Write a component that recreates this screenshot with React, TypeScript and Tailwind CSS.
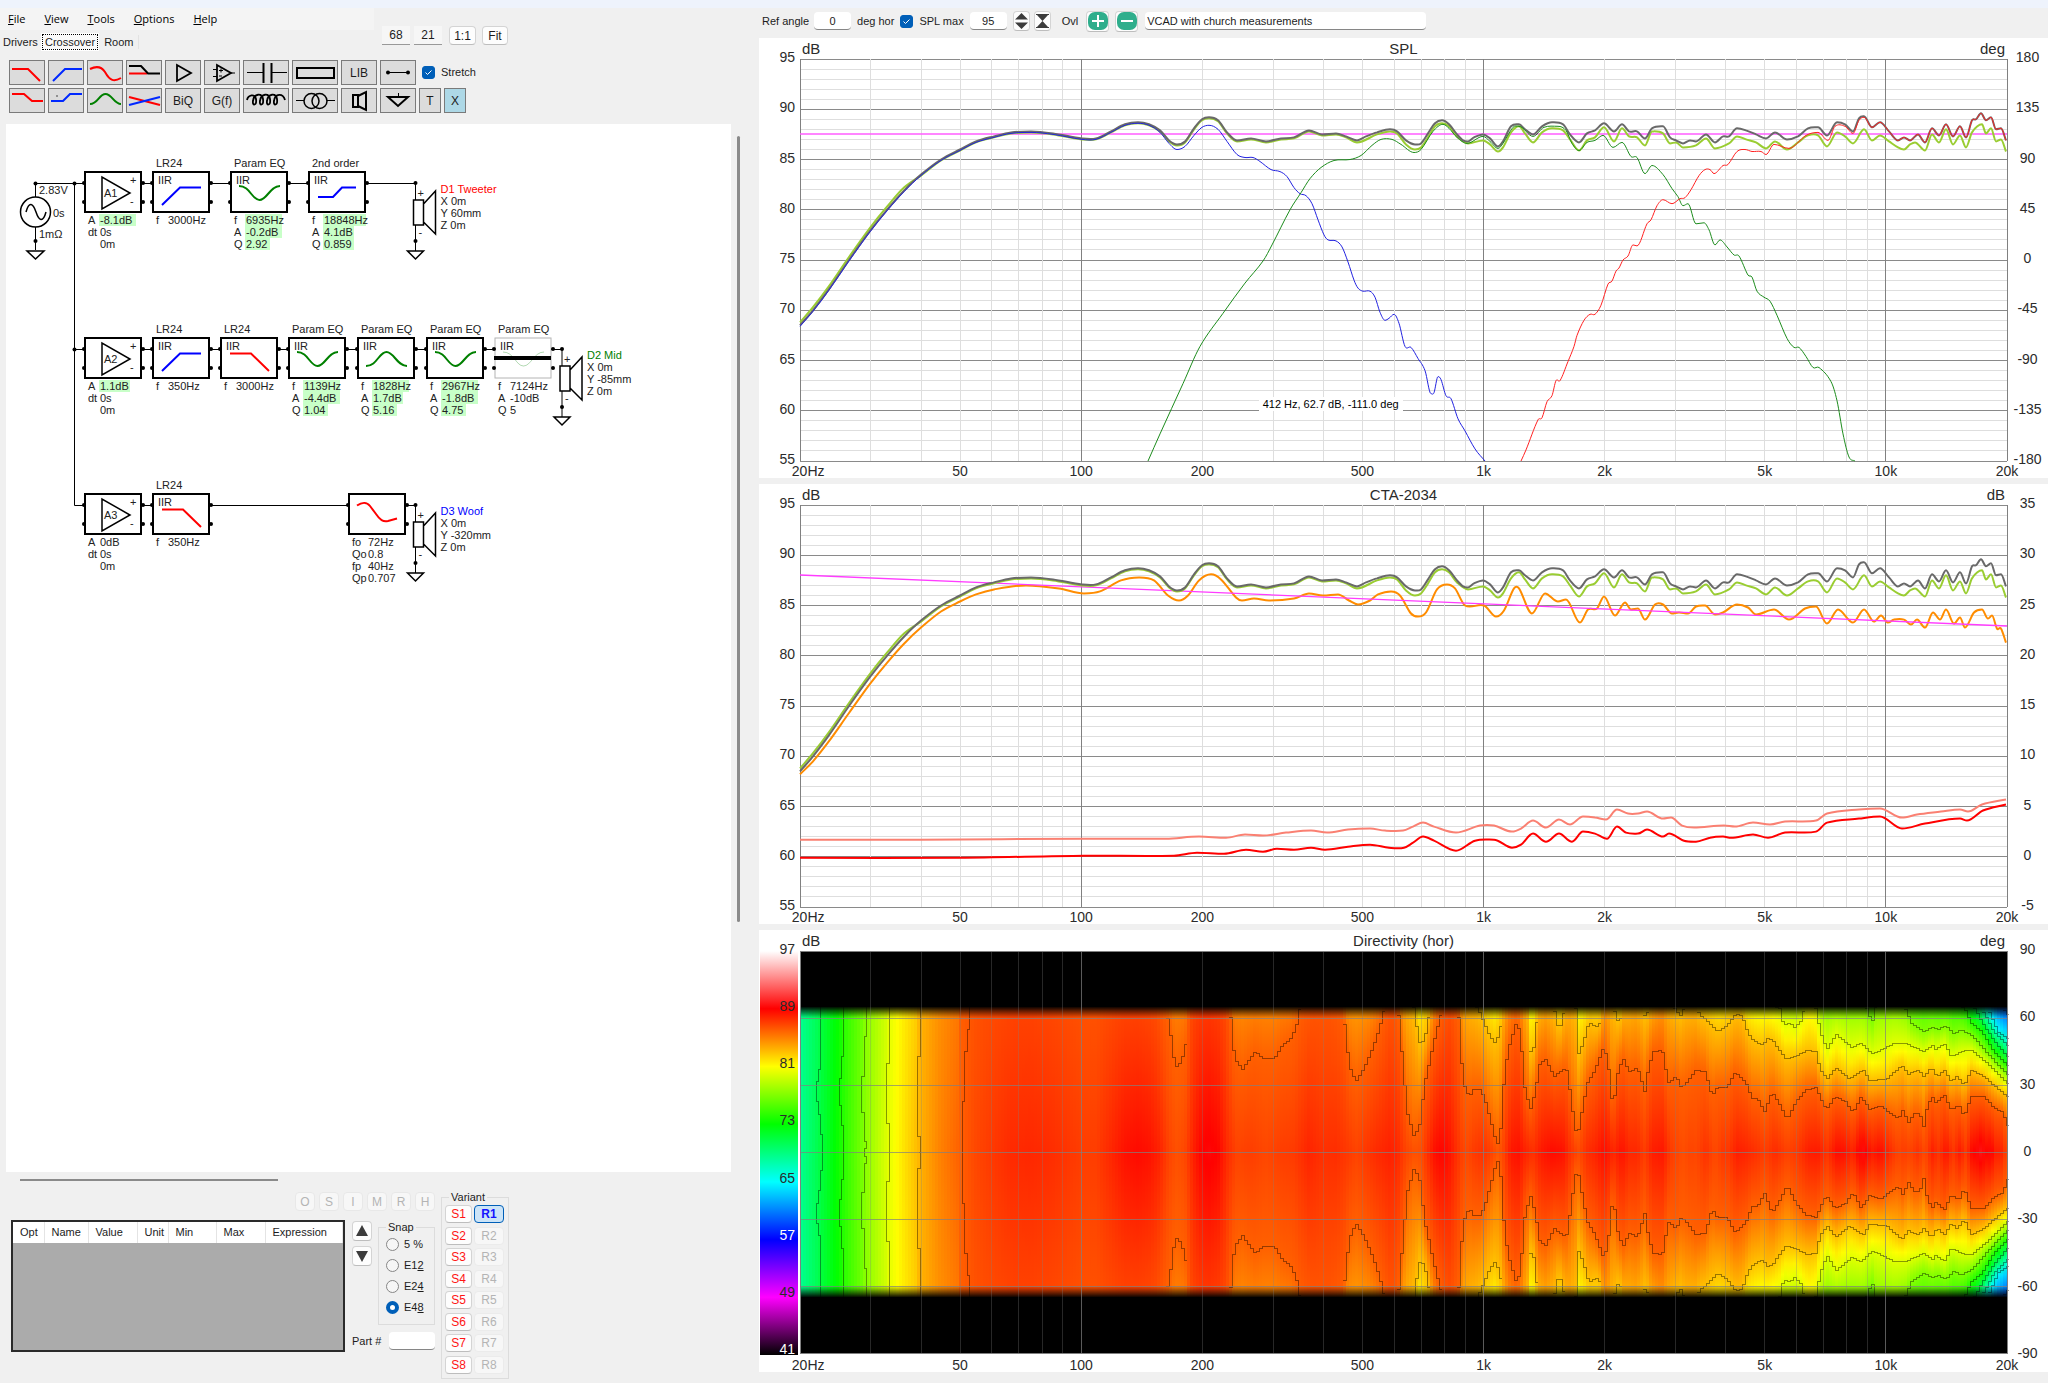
import { ReactNode } from "react";

const PLOT_W = 1207;
const PLOT_H = 402;

// curves: x along the plot, level in dB
const ON_AXIS = [
    0, 68.5, 13, 70, 29, 72.1, 49, 75, 70, 77.9, 87, 80, 104, 81.9, 121, 83.5, 141, 85, 160, 86, 176, 86.8, 194, 87.3,
    211, 87.7, 231, 87.8, 253, 87.6, 282, 87.1, 296, 87.1, 311, 87.8, 325, 88.5, 338, 88.7, 349, 88.5, 360, 87.9, 369,
    86.9, 377, 86.5, 385, 86.8, 394, 88.1, 402, 89, 409, 89.2, 418, 88.9, 427, 87.7, 437, 86.9, 451, 87.1, 466, 86.8,
    481, 87.1, 494, 87.2, 509, 87.9, 522, 87.5, 536, 87.6, 546, 87.3, 557, 86.9, 566, 87.3, 577, 87.7, 590, 88, 597,
    87.8, 606, 86.9, 615, 86.5, 621, 86.6, 628, 87.6, 635, 88.6, 642, 88.9, 649, 88.5, 657, 87.5, 663, 86.9, 668, 86.8,
    674, 87.2, 683, 87.5, 690, 87.1, 698, 86.3, 703, 86.8, 711, 88.3, 719, 88.5, 725, 88, 733, 87.5, 742, 88.3, 752,
    88.7, 763, 88.5, 770, 87.5, 779, 86.7, 787, 87.6, 795, 87.9, 804, 88.6, 814, 87.8, 822, 88.5, 829, 87.8, 837, 87.8,
    845, 87.1, 852, 88.1, 863, 88.3, 870, 87.2, 876, 86.9, 883, 86.6, 890, 86.9, 896, 86.8, 906, 87.5, 915, 86.7, 923,
    87.3, 929, 87.3, 937, 88.1, 946, 87.9, 956, 87.5, 966, 87.1, 975, 87.7, 987, 87, 998, 87.3, 1008, 88.1, 1018, 88.2,
    1027, 87.4, 1037, 88.7, 1045, 88.5, 1053, 87.8, 1059, 89.1, 1064, 89.3, 1072, 88.2, 1080, 88.7, 1089, 87.8, 1098,
    86.9, 1104, 87.2, 1110, 86.9, 1118, 87.5, 1125, 86.7, 1132, 88.1, 1139, 87.4, 1146, 88.5, 1153, 87.3, 1160, 88.3,
    1166, 87.2, 1172, 88.9, 1176, 89, 1181, 89.6, 1186, 88.9, 1191, 89.2, 1196, 88, 1201, 88.1, 1206, 86.9,
];

const LISTENING_HIGH = [
    557, 86.7, 577, 87.5, 590, 87.8, 597, 87.6, 606, 86.5, 615, 86, 621, 86.2, 628, 87.2, 635, 88.3, 642, 88.6, 649,
    88.3, 657, 87.3, 668, 86.6, 683, 86.9, 690, 86.5, 698, 85.8, 703, 86.2, 711, 87.7, 719, 88.3, 725, 87.6, 733, 86.7,
    742, 87.7, 752, 88.1, 763, 87.9, 770, 87, 779, 85.9, 787, 86.9, 795, 87.2, 804, 88.2, 814, 86.8, 822, 88.1, 829,
    87.3, 837, 87.2, 845, 86.4, 852, 87.8, 863, 87.6, 870, 86.6, 876, 86.7, 883, 86.2, 896, 86.4, 906, 87.1, 915, 86.1,
    929, 86.6, 937, 87.3, 946, 87, 956, 86.7, 966, 86.1, 975, 86.8, 987, 86, 998, 86.7, 1008, 87.4, 1018, 87.4, 1027,
    86.3, 1037, 87.7, 1045, 87.3, 1053, 86.6, 1064, 88, 1072, 86.9, 1080, 87.4, 1089, 86.8, 1098, 86.2, 1104, 86, 1110,
    86.5, 1115, 86.7, 1125, 85.9, 1132, 87.5, 1139, 86.7, 1146, 88, 1153, 86.5, 1160, 87.4, 1166, 86.2, 1172, 87.7,
    1182, 88.5, 1186, 87.6, 1191, 88.1, 1196, 86.8, 1201, 87, 1206, 85.8,
];

const WOOFER_HIGH = [
    360, 87.7, 369, 86.6, 377, 86, 385, 86.3, 394, 87.4, 402, 88.2, 409, 88.4, 418, 88, 427, 86.8, 437, 85.5, 445, 85.2,
    453, 85.2, 460, 84.8, 471, 84, 480, 83.8, 487, 83.3, 494, 82.2, 500, 81.6, 506, 81.4, 512, 80.6, 518, 79, 524, 77.5,
    528, 77, 536, 76.9, 542, 76.3, 548, 74.8, 554, 73, 558, 72.2, 563, 71.9, 570, 71.9, 575, 71.3, 580, 69.8, 585, 69,
    589, 69.2, 594, 69.6, 599, 68.7, 605, 66.4, 611, 66.3, 618, 65.2, 625, 64, 631, 61.7, 634, 61.8, 638, 63.4, 641,
    63.1, 646, 61.5, 651, 61.2, 658, 59.2, 665, 58, 675, 56.2, 685, 55,
];

const MID = [
    348, 55, 360, 57.7, 383, 62.7, 400, 66.4, 423, 69.7, 445, 72.7, 463, 74.9, 472, 76.5, 490, 80, 501, 81.7, 510, 83.1,
    521, 84.2, 534, 84.9, 550, 85, 561, 85.4, 572, 86.4, 581, 87, 592, 87, 601, 86.5, 614, 85.7, 621, 86, 633, 87.8,
    643, 88.5, 649, 88.1, 657, 87.2, 667, 86.6, 683, 87.3, 690, 86.8, 698, 86.1, 703, 86.6, 713, 88.2, 719, 88.3, 733,
    87.3, 744, 88.2, 758, 88.3, 766, 87.9, 772, 86.6, 779, 85.9, 787, 86.7, 795, 86.9, 803, 87.4, 813, 86.2, 822, 86.7,
    831, 85.3, 837, 85.2, 845, 83.6, 852, 84.4, 863, 83.5, 872, 82.1, 878, 81.3, 883, 80.4, 888, 80.6, 896, 78.6, 904,
    78.7, 909, 78, 915, 76.5, 920, 77, 927, 76.3, 934, 75.5, 939, 75.4, 948, 73.5, 952, 73.3, 957, 71.9, 964, 71.3, 970,
    70.9, 977, 69.5, 987, 67.2, 994, 66.3, 999, 66.3, 1006, 65.4, 1013, 64.3, 1019, 64.3, 1031, 62.9, 1037, 61, 1043,
    57.7, 1049, 55.4, 1055, 55,
];

const TWEETER_LOW = [
    721, 55, 726, 56.1, 738, 59.1, 742, 59.3, 747, 60.9, 752, 61.5, 756, 63, 760, 63, 768, 64.9, 774, 66.4, 777, 67.5,
    784, 69, 790, 69.6, 795, 69.6, 801, 70.5, 808, 72.6, 812, 72.9, 816, 73.9, 819, 74.2, 823, 75, 828, 75.4, 833, 76.5,
    837, 76.4, 847, 78.6, 851, 79, 857, 80.4, 863, 81, 872, 80.6, 880, 81.1, 885, 81.2, 891, 82, 899, 83.4, 905, 84,
    910, 84, 914, 83.6, 923, 84.4, 928, 84.5, 937, 85.8, 945, 86, 952, 85.8, 961, 85.8, 966, 85.5, 974, 86.5, 989, 86.1,
    1006, 87.4, 1018, 87.7, 1028, 86.9, 1035, 88.3, 1045, 88.3, 1053, 87.6, 1059, 88.9, 1064, 89.2,
];

const POWER = [
    0, 68.2, 13, 69.5, 29, 71.5, 49, 74.3, 70, 77.2, 87, 79.3, 104, 81.2, 121, 82.8, 141, 84.4, 160, 85.4, 176, 86.1,
    194, 86.6, 226, 87, 259, 86.7, 284, 86.2, 300, 86.4, 321, 87.5, 339, 87.8, 354, 87.5, 368, 86, 379, 85.5, 388, 86,
    399, 87.5, 411, 88.1, 421, 87.6, 436, 85.8, 442, 85.5, 454, 85.7, 469, 85.5, 494, 85.7, 509, 86.2, 523, 86, 538,
    86.1, 549, 85.5, 558, 85.1, 570, 85.5, 578, 86.1, 591, 86.4, 600, 86, 611, 84.2, 618, 83.9, 626, 84.3, 637, 86.6,
    647, 87.1, 655, 86.7, 665, 85, 684, 85, 696, 83.9, 704, 84.5, 714, 86.7, 719, 86.7, 732, 84.2, 745, 86.2, 758, 85.4,
    766, 85.6, 780, 83.3, 788, 84.6, 797, 84.7, 804, 85.9, 815, 84, 825, 85.3, 831, 84.6, 838, 84.7, 845, 83.6, 855,
    85.1, 863, 85.1, 872, 84.2, 879, 84.3, 888, 84.2, 896, 84.9, 905, 85, 915, 84.1, 923, 84.3, 937, 85.1, 948, 84.8,
    956, 84.1, 974, 84.6, 989, 83.6, 1005, 84.7, 1016, 84.9, 1027, 83.2, 1038, 84.6, 1053, 83.3, 1064, 84.6, 1074, 83.4,
    1081, 84, 1088, 83.3, 1094, 83.6, 1104, 83.6, 1111, 83.1, 1117, 83.6, 1125, 82.8, 1133, 84.3, 1140, 83.6, 1146,
    84.6, 1154, 83.2, 1160, 83.8, 1165, 82.8, 1174, 84.3, 1182, 84.6, 1188, 83.7, 1192, 84, 1197, 82.7, 1201, 82.7,
    1206, 81.3,
];

const SPDI = [
    0, 61.7, 119, 61.7, 284, 61.8, 366, 61.8, 399, 62, 426, 61.9, 445, 62.2, 463, 62.1, 486, 62.4, 511, 62.6, 527, 62.4,
    548, 62.7, 570, 62.8, 585, 62.6, 603, 62.6, 613, 63, 623, 63.4, 634, 63, 656, 62.4, 680, 63.1, 694, 63.1, 712, 62.5,
    721, 62.8, 733, 63.6, 746, 62.9, 759, 63.7, 770, 63.2, 783, 64, 795, 63.9, 806, 63.7, 817, 64.7, 828, 64.3, 838,
    64.3, 847, 64.5, 863, 63.8, 871, 63.9, 882, 63.1, 894, 62.9, 924, 63.1, 935, 63, 953, 63.4, 970, 63.2, 985, 63.5,
    1016, 63.6, 1027, 64.3, 1059, 64.7, 1080, 64.8, 1102, 63.9, 1117, 64.2, 1141, 64.5, 1160, 64.7, 1168, 64.5, 1182,
    65.2, 1206, 65.7,
];

const ERDI = [
    0, 59.9, 160, 59.9, 284, 60.1, 374, 60.1, 397, 60.4, 424, 60.3, 446, 60.7, 463, 60.5, 477, 60.8, 494, 60.7, 511,
    60.9, 525, 60.7, 548, 61, 570, 61.2, 589, 60.9, 604, 60.9, 613, 61.4, 623, 62, 634, 61.6, 656, 60.6, 675, 61.6, 694,
    61.7, 712, 60.9, 721, 61.2, 733, 62.3, 746, 61.5, 759, 62.3, 772, 61.5, 783, 62.5, 795, 62.3, 807, 61.8, 817, 63,
    826, 62.4, 838, 62.3, 847, 62.7, 863, 62, 869, 62.3, 884, 61.6, 896, 61.5, 910, 61.9, 923, 62, 931, 61.9, 953, 62.2,
    968, 61.9, 985, 62.4, 1016, 62.5, 1027, 63.4, 1059, 63.8, 1080, 64, 1102, 62.8, 1125, 63.3, 1160, 63.8, 1167, 63.6,
    1183, 64.6, 1206, 65.2,
];

// angle at which the level drops to each contour, x along the plot
const CONTOURS: { level: number; data: number[] }[] = [
    {
        level: 86,
        data: [
            0, 200, 355, 90, 366, 64, 371, 51, 373, 43, 377, 38, 382, 42, 387, 51, 388, 66, 392, 110, 425, 100, 430, 64,
            432, 49, 435, 42, 442, 37, 448, 41, 455, 45, 464, 42, 474, 42, 482, 48, 491, 51, 497, 58, 500, 65, 515, 80,
            530, 80, 543, 64, 547, 46, 551, 36, 556, 32, 562, 36, 571, 45, 579, 55, 584, 64, 591, 80, 598, 64, 603, 37,
            607, 18, 614, 7, 620, 13, 624, 30, 630, 42, 636, 54, 642, 64, 650, 80, 658, 64, 661, 42, 664, 30, 669, 25,
            673, 28, 680, 28, 684, 25, 690, 15, 697, 3, 701, 12, 704, 34, 708, 46, 716, 58, 720, 54, 724, 30, 730, 19,
            735, 27, 739, 39, 745, 42, 754, 34, 760, 36, 766, 38, 770, 27, 775, 10, 778, 9, 782, 19, 787, 31, 795, 37,
            804, 48, 809, 36, 811, 24, 814, 24, 818, 37, 823, 42, 829, 36, 837, 38, 841, 33, 844, 26, 848, 37, 853, 45,
            862, 46, 868, 31, 876, 34, 881, 29, 888, 32, 896, 37, 905, 36, 912, 25, 917, 29, 927, 29, 935, 36, 946, 31,
            952, 24, 958, 24, 964, 18, 972, 27, 979, 22, 987, 15, 996, 23, 1006, 28, 1016, 29, 1026, 19, 1035, 25, 1045,
            23, 1053, 18, 1061, 25, 1070, 19, 1080, 21, 1089, 18, 1098, 15, 1103, 19, 1108, 13, 1115, 18, 1120, 17, 1124,
            11, 1127, 21, 1132, 25, 1136, 22, 1144, 26, 1151, 19, 1159, 21, 1164, 16, 1171, 25, 1184, 25, 1194, 20, 1203,
            18, 1207, 12,
        ],
    },
    {
        level: 83,
        data: [
            0, 400, 360, 120, 430, 100, 550, 85, 600, 85, 614, 64, 619, 49, 624, 50, 630, 64, 640, 110, 655, 100, 665, 72,
            678, 64, 684, 58, 690, 52, 695, 49, 700, 54, 702, 64, 712, 95, 722, 85, 728, 64, 730, 45, 733, 45, 738, 64,
            746, 70, 754, 64, 759, 54, 764, 63, 770, 70, 776, 64, 777, 43, 783, 49, 787, 56, 791, 58, 795, 56, 800, 58,
            802, 65, 806, 75, 814, 64, 819, 57, 823, 65, 835, 70, 843, 64, 846, 59, 849, 66, 862, 78, 872, 66, 880, 61,
            886, 66, 895, 66, 900, 61, 905, 60, 911, 57, 918, 54, 927, 57, 936, 62, 942, 61, 948, 53, 954, 50, 963, 48,
            967, 51, 973, 50, 979, 46, 986, 42, 996, 43, 1008, 46, 1016, 45, 1020, 37, 1027, 33, 1036, 38, 1049, 33, 1063,
            37, 1070, 32, 1087, 33, 1102, 39, 1108, 35, 1118, 37, 1124, 34, 1131, 38, 1137, 34, 1144, 37, 1151, 32, 1157,
            34, 1164, 30, 1171, 37, 1184, 34, 1194, 30, 1207, 25,
        ],
    },
    {
        level: 80,
        data: [
            0, 500, 360, 200, 600, 130, 619, 78, 640, 140, 695, 75, 715, 120, 731, 72, 746, 90, 759, 80, 777, 72, 800, 85,
            900, 80, 960, 68, 981, 64, 983, 57, 989, 58, 995, 56, 1001, 59, 1004, 64, 1010, 68, 1016, 64, 1020, 54, 1027,
            46, 1036, 53, 1052, 47, 1061, 49, 1072, 44, 1095, 49, 1105, 49, 1124, 45, 1132, 48, 1136, 46, 1144, 49, 1151,
            43, 1161, 45, 1171, 46, 1182, 42, 1192, 38, 1207, 31,
        ],
    },
    {
        level: 77,
        data: [
            0, 600, 600, 200, 900, 110, 980, 80, 1010, 80, 1027, 68, 1065, 66, 1072, 58, 1076, 66, 1095, 68, 1106, 64,
            1111, 58, 1124, 54, 1132, 56, 1138, 55, 1146, 57, 1153, 53, 1161, 55, 1173, 52, 1186, 45, 1207, 35,
        ],
    },
    { level: 74, data: [0, 700, 900, 140, 1050, 82, 1130, 76, 1165, 64, 1171, 58, 1182, 54, 1194, 45, 1207, 39] },
    { level: 71, data: [0, 800, 900, 170, 1100, 95, 1160, 76, 1175, 64, 1184, 57, 1194, 50, 1207, 43] },
    { level: 68, data: [0, 900, 900, 200, 1100, 120, 1165, 80, 1182, 64, 1194, 54, 1207, 48] },
    { level: 65, data: [0, 1000, 900, 240, 1100, 150, 1170, 90, 1188, 64, 1198, 54, 1207, 51] },
    { level: 60, data: [0, 1200, 900, 300, 1100, 190, 1175, 110, 1192, 72, 1207, 62] },
];

// near-vertical contours of the bass roll-off: angle, x
const BASS_CONTOURS = [
    [65, 20, 37, 18, 32, 16, 23, 18, 17, 20, 8, 22, 0, 22],
    [65, 43, 43, 41, 33, 39, 21, 41, 12, 43, 0, 43],
    [65, 66, 52, 64, 34, 61, 18, 64, 5, 66, 2, 64, 0, 65],
    [65, 89, 40, 86, 13, 89, 0, 89],
    [65, 120, 43, 117, 7, 120, 0, 119],
    [65, 169, 55, 167, 45, 164, 23, 162, 0, 162],
];

type Pt = [number, number];

function pairs(flat: number[]): Pt[] {
    const out: Pt[] = [];
    for (let i = 0; i < flat.length; i += 2) out.push([flat[i], flat[i + 1]]);
    return out;
}

function valueAt(pts: Pt[], x: number) {
    for (let i = 1; i < pts.length; i++) {
        if (x <= pts[i][0]) {
            const [x0, y0] = pts[i - 1];
            const [x1, y1] = pts[i];
            return y0 + ((y1 - y0) * (x - x0)) / (x1 - x0 || 1);
        }
    }
    return pts[pts.length - 1][1];
}

// tangent at point i, flat at peaks so the curve never overshoots its data
function slopeAt(p: Pt[], i: number) {
    const a = p[Math.max(i - 1, 0)];
    const b = p[i];
    const c = p[Math.min(i + 1, p.length - 1)];
    if ((b[1] - a[1]) * (c[1] - b[1]) < 0) return 0;
    return (c[1] - a[1]) / (c[0] - a[0]);
}

function smoothPath(pts: Pt[]) {
    const p = pts.map(([x, db]): Pt => [x, ((95 - db) / 40) * PLOT_H]);
    let d = `M${p[0][0]} ${p[0][1].toFixed(1)}`;
    for (let i = 0; i < p.length - 1; i++) {
        const b = p[i];
        const c = p[i + 1];
        const dx = (c[0] - b[0]) / 3;
        const y1 = b[1] + slopeAt(p, i) * dx;
        const y2 = c[1] - slopeAt(p, i + 1) * dx;
        d += `C${(b[0] + dx).toFixed(1)} ${y1.toFixed(1)} ${(c[0] - dx).toFixed(1)} ${y2.toFixed(1)} ${c[0]} ${c[1].toFixed(1)}`;
    }
    return d;
}

const onAxis = pairs(ON_AXIS);
const listening: Pt[] = [
    ...onAxis.filter(([x]) => x < 550).map(([x, y]): Pt => [x, x < 120 ? y + 0.3 : y - 0.1]),
    ...pairs(LISTENING_HIGH),
];
const woofer: Pt[] = [...onAxis.filter(([x]) => x < 350).map(([x, y]): Pt => [x, y - 0.1]), ...pairs(WOOFER_HIGH)];
const tweeter: Pt[] = [...pairs(TWEETER_LOW), ...onAxis.filter(([x]) => x > 1066)];

const freqX = (f: number) => (Math.log10(f / 20) / 3) * PLOT_W;

const FREQS: number[] = [];
for (const dec of [10, 100, 1000, 10000]) {
    for (let m = 1; m < 10; m++) {
        const f = dec * m;
        if (f > 20 && f < 20000) FREQS.push(f);
    }
}
const isDecade = (f: number) => f === 100 || f === 1000 || f === 10000;

const X_TICKS: [string, number][] = [
    ["20Hz", 20],
    ["50", 50],
    ["100", 100],
    ["200", 200],
    ["500", 500],
    ["1k", 1000],
    ["2k", 2000],
    ["5k", 5000],
    ["10k", 10000],
    ["20k", 20000],
];

function range(from: number, to: number, step: number) {
    const out: number[] = [];
    for (let v = from; step > 0 ? v <= to : v >= to; v += step) out.push(v);
    return out;
}

function AxisLabels({ values, className }: { values: number[]; className: string }) {
    return (
        <div className={`flex flex-col justify-between -mt-3 -mb-2 leading-5 ${className}`}>
            {values.map((v) => (
                <span key={v}>{v}</span>
            ))}
        </div>
    );
}

type ChartProps = {
    title: string;
    leftUnit: string;
    rightUnit: string;
    left: ReactNode;
    right: number[];
    children: ReactNode;
};

function Chart({ title, leftUnit, rightUnit, left, right, children }: ChartProps) {
    return (
        <section className="grid grid-cols-[41px_1fr_41px] bg-white text-sm text-[#2b2b2b]">
            <header className="col-start-2 grid grid-cols-3 h-[21px] items-center px-[2px] text-[15px] leading-5">
                <span>{leftUnit}</span>
                <h2 className="text-center">{title}</h2>
                <span className="text-right">{rightUnit}</span>
            </header>
            <div className="col-start-1 row-start-2 flex flex-col">{left}</div>
            <div className="relative row-start-2">{children}</div>
            <AxisLabels values={right} className="row-start-2 text-center" />
            <div className="relative col-start-2 row-start-3 h-[17px] leading-5">
                {X_TICKS.map(([label, f]) => (
                    <span
                        key={label}
                        className={`absolute top-0 ${f === 20 ? "-translate-x-1/4" : "-translate-x-1/2"}`}
                        style={{ left: `${(freqX(f) / PLOT_W) * 100}%` }}
                    >
                        {label}
                    </span>
                ))}
            </div>
        </section>
    );
}

function Grid() {
    return (
        <g shapeRendering="crispEdges">
            {range(0, 40, 1).map((i) => (
                <path key={i} d={`M0 ${(i / 40) * PLOT_H}H${PLOT_W}`} stroke={i % 5 ? "#dedede" : "#8a8a8a"} />
            ))}
            {FREQS.map((f) => (
                <path key={f} d={`M${freqX(f)} 0V${PLOT_H}`} stroke={isDecade(f) ? "#808080" : "#dedede"} />
            ))}
            <path d={`M0 0V${PLOT_H}M${PLOT_W} 0V${PLOT_H}`} stroke="#808080" />
        </g>
    );
}

function PlotSvg({ children }: { children: ReactNode }) {
    return (
        <svg
            viewBox={`0 0 ${PLOT_W} ${PLOT_H}`}
            preserveAspectRatio="none"
            className="block w-full h-[402px] overflow-visible"
            fill="none"
        >
            {children}
        </svg>
    );
}

const SCALE: [number, number, number, number][] = [
    [97, 255, 255, 255],
    [89, 255, 0, 0],
    [81, 255, 255, 0],
    [73, 0, 255, 0],
    [65, 0, 255, 255],
    [57, 0, 0, 255],
    [49, 255, 0, 255],
    [41, 0, 0, 0],
];

function heatColor(level: number) {
    for (let i = 1; i < SCALE.length; i++) {
        if (level >= SCALE[i][0]) {
            const t = Math.min((level - SCALE[i][0]) / 8, 1);
            const mix = (c: number) => Math.round(SCALE[i][c] + (SCALE[i - 1][c] - SCALE[i][c]) * t);
            return `rgb(${mix(1)},${mix(2)},${mix(3)})`;
        }
    }
    return "#000";
}

const contours = CONTOURS.map((c) => ({ level: c.level, pts: pairs(c.data) }));
const COL = 3;
const DEG = PLOT_H / 180;

const heatColumns = range(0, PLOT_W - 1, COL).map((x) => {
    const top = valueAt(onAxis, x + COL / 2);
    const knots: Pt[] = [[0, top]];
    for (const c of contours) {
        const angle = valueAt(c.pts, x + COL / 2);
        if (c.level < top && angle > knots[knots.length - 1][0]) knots.push([angle, c.level]);
    }
    return { x, stops: range(65, 0, -5).map((a) => heatColor(valueAt(knots, a))) };
});

function contourPath(pts: Pt[]) {
    let d = "";
    let pen = false;
    for (const x of range(0, PLOT_W - 1, COL)) {
        const angle = valueAt(pts, x + COL / 2);
        if (angle > 65) {
            pen = false;
            continue;
        }
        const y = -Math.round(angle * DEG);
        d += pen ? `V${y}H${x + COL}` : `M${x} ${y}H${x + COL}`;
        pen = true;
    }
    return d;
}

function bassPath(flat: number[]) {
    return pairs(flat)
        .map(([a, x], i) => (i ? `V${-Math.round(a * DEG)}H${x}` : `M${x} ${-Math.round(a * DEG)}`))
        .join("");
}

function Heatmap() {
    return (
        <PlotSvg>
            <defs>
                {heatColumns.map(({ x, stops }) => (
                    <linearGradient key={x} id={`col${x}`} x1="0" y1="0" x2="0" y2="1">
                        {stops.map((color, i) => (
                            <stop key={i} offset={i / (stops.length - 1)} stopColor={color} />
                        ))}
                    </linearGradient>
                ))}
                <linearGradient id="edge" x1="0" y1="0" x2="0" y2="1">
                    <stop offset="0.1" stopColor="#000" />
                    <stop offset="1" stopColor="#000" stopOpacity="0" />
                </linearGradient>
                <g id="half" shapeRendering="crispEdges">
                    {heatColumns.map(({ x }) => (
                        <rect
                            key={x}
                            x={x}
                            y={-65 * DEG}
                            width={Math.min(COL, PLOT_W - x)}
                            height={65 * DEG}
                            fill={`url(#col${x})`}
                        />
                    ))}
                    <g stroke="#000" strokeOpacity="0.4">
                        {contours.map((c) => (
                            <path key={c.level} d={contourPath(c.pts)} />
                        ))}
                        {BASS_CONTOURS.map((c, i) => (
                            <path key={i} d={bassPath(c)} />
                        ))}
                    </g>
                    <rect x="0" y="-147" width={PLOT_W} height="13" fill="url(#edge)" />
                </g>
            </defs>
            <rect width={PLOT_W} height={PLOT_H} fill="#000" />
            <g transform={`translate(0 ${PLOT_H / 2})`}>
                <use href="#half" />
                <use href="#half" transform="scale(1 -1)" />
            </g>
            <g shapeRendering="crispEdges" stroke="#808080">
                {[-60, -30, 0, 30, 60].map((a) => (
                    <path key={a} d={`M0 ${PLOT_H / 2 - a * DEG}H${PLOT_W}`} strokeOpacity="0.7" />
                ))}
                {FREQS.map((f) => (
                    <path key={f} d={`M${freqX(f)} 0V${PLOT_H}`} strokeOpacity={isDecade(f) ? 0.7 : 0.3} />
                ))}
                <path d={`M0 0H${PLOT_W}V${PLOT_H}H0Z`} />
            </g>
        </PlotSvg>
    );
}

const SCALE_TEXT: Record<number, string> = { 57: "text-white", 41: "text-white" };

function ColorScale() {
    return (
        <div className="flex h-[404px] ml-px mr-[2px] bg-[linear-gradient(to_bottom,#fff,#f00,#ff0,#0f0,#0ff,#00f,#f0f,#000)]">
            <div className="flex flex-1 flex-col justify-between -mt-3 -mb-1 pr-[3px] text-right leading-5">
                {SCALE.map(([level]) => (
                    <span key={level} className={SCALE_TEXT[level] ?? "text-[#2b2b2b]"}>
                        {level}
                    </span>
                ))}
            </div>
        </div>
    );
}

function SplChart() {
    return (
        <Chart
            title="SPL"
            leftUnit="dB"
            rightUnit="deg"
            left={<AxisLabels values={range(95, 55, -5)} className="flex-1 pr-[5px] text-right" />}
            right={range(180, -180, -45)}
        >
            <PlotSvg>
                <Grid />
                <path d={`M0 75H${PLOT_W}`} stroke="#ff5cff" strokeWidth="1.5" />
                <path d={smoothPath(listening)} stroke="#9acd32" strokeWidth="2" />
                <path d={smoothPath(onAxis)} stroke="#696969" strokeWidth="2" />
                <path d={smoothPath(woofer)} stroke="#2222e0" />
                <path d={smoothPath(pairs(MID))} stroke="#1c8c1c" />
                <path d={smoothPath(tweeter)} stroke="#f22" />
            </PlotSvg>
            <span className="absolute left-[38%] top-[338px] bg-white px-1 text-[11px] leading-[14px] text-black">
                412 Hz, 62.7 dB, -111.0 deg
            </span>
        </Chart>
    );
}

function CtaChart() {
    return (
        <Chart
            title="CTA-2034"
            leftUnit="dB"
            rightUnit="dB"
            left={<AxisLabels values={range(95, 55, -5)} className="flex-1 pr-[5px] text-right" />}
            right={range(35, -5, -5)}
        >
            <PlotSvg>
                <Grid />
                <path d={smoothPath(pairs(POWER))} stroke="#ff8c00" strokeWidth="2" />
                <path d={`M0 70L${PLOT_W} 121`} stroke="#ff3cff" strokeWidth="1.3" />
                <path d={smoothPath(listening)} stroke="#9acd32" strokeWidth="2" />
                <path d={smoothPath(onAxis)} stroke="#696969" strokeWidth="2" />
                <path d={smoothPath(pairs(SPDI))} stroke="#fa8072" strokeWidth="2" />
                <path d={smoothPath(pairs(ERDI))} stroke="#f00" strokeWidth="2" />
            </PlotSvg>
        </Chart>
    );
}

const FIELD = "h-[18px] bg-white border-b border-[#868686] rounded-sm text-[11px]";
const SMALL_BUTTON = "flex items-center justify-center bg-[#fdfdfd] border border-[#d4d4d4] border-b-[#bdbdbd] rounded";

function Tick({ id, label }: { id: string; label: string }) {
    return (
        <span className="flex items-center gap-[6px]">
            <span className="relative flex">
                <input
                    id={id}
                    type="checkbox"
                    defaultChecked
                    className="peer size-[13px] appearance-none rounded-[3px] border border-[#868686] checked:border-[#005fb8] checked:bg-[#005fb8]"
                />
                <svg
                    viewBox="0 0 13 13"
                    className="pointer-events-none absolute inset-0 hidden size-[13px] peer-checked:block"
                    fill="none"
                    stroke="#fff"
                >
                    <path d="M3.500 6.500l2 2 4-4" />
                </svg>
            </span>
            <label htmlFor={id}>{label}</label>
        </span>
    );
}

function ChartToolbar() {
    return (
        <div className="flex h-[30px] items-center pb-[4px] pl-[3px]">
            <label htmlFor="angle">Ref angle</label>
            <input id="angle" defaultValue="0" className={`${FIELD} ml-[5px] w-[37px] text-center`} />
            <span className="mx-[6px]">deg hor</span>
            <Tick id="splmax" label="SPL max" />
            <input aria-label="SPL max value" defaultValue="95" className={`${FIELD} ml-[6px] w-[37px] text-center`} />
            <button aria-label="Step" className={`${SMALL_BUTTON} ml-[6px] h-5 w-[17px]`}>
                <svg width="13" height="16" fill="#3c3c3c">
                    <path d="M6.500 0L13 6.500H0zM0 9.500h13L6.500 16z" />
                </svg>
            </button>
            <button aria-label="Fit range" className={`${SMALL_BUTTON} ml-1 h-5 w-[17px]`}>
                <svg width="13" height="16" fill="#3c3c3c">
                    <path d="M0 1h13v1H0zM1 2h11L6.500 8zM6.500 8L12 14H1zM0 14h13v1H0z" />
                </svg>
            </button>
            <span className="ml-[11px] mr-[8px]">Ovl</span>
            <button aria-label="Add overlay" className={`${SMALL_BUTTON} h-[21px] w-[23px]`}>
                <svg width="20" height="18" fill="#2fae8c" stroke="#fff" strokeWidth="2">
                    <rect width="20" height="18" rx="7" stroke="none" />
                    <path d="M4 9h12M10 3v12" />
                </svg>
            </button>
            <button aria-label="Remove overlay" className={`${SMALL_BUTTON} ml-[6px] h-[21px] w-[23px]`}>
                <svg width="20" height="18" fill="#2fae8c" stroke="#fff" strokeWidth="2">
                    <rect width="20" height="18" rx="7" stroke="none" />
                    <path d="M4 9h12" />
                </svg>
            </button>
            <input
                aria-label="Project title"
                defaultValue="VCAD with church measurements"
                className={`${FIELD} ml-[7px] w-[281px] px-[2px]`}
            />
        </div>
    );
}

const TOOLS: { name: string; width: string; row: number; icon?: ReactNode; text?: string }[] = [
    { name: "Low pass", width: "w-9", row: 1, icon: <path d="M3 9h16l12 12" stroke="red" strokeWidth="2" /> },
    { name: "High pass", width: "w-9", row: 1, icon: <path d="M5 21L17 9h17" stroke="#0028ff" strokeWidth="2" /> },
    {
        name: "Linkwitz transform",
        width: "w-9",
        row: 1,
        icon: <path d="M3 9C9 6 14 6 18 12c5 9 9 10 16 6" stroke="red" strokeWidth="2" />,
    },
    {
        name: "Shelf pair",
        width: "w-9",
        row: 1,
        icon: (
            <>
                <path d="M3 13.500h18" stroke="red" strokeWidth="2" />
                <path d="M3 6h12l7 7.500h12" stroke="#000" strokeWidth="2" />
            </>
        ),
    },
    { name: "Buffer", width: "w-9", row: 1, icon: <path d="M12 5v16l14-8z" stroke="#000" strokeWidth="1.800" /> },
    {
        name: "Op amp",
        width: "w-9",
        row: 1,
        icon: (
            <>
                <path d="M13 5v16l14-8z" stroke="#000" strokeWidth="1.800" />
                <path d="M27 13h4M9 9.500h4M9 16.500h4M15 10.500h4M17 8.500v4M15 16h3" stroke="#000" />
            </>
        ),
    },
    {
        name: "Capacitor",
        width: "w-[46px]",
        row: 1,
        icon: (
            <>
                <path d="M4 12.500h16M28 12.500h16" stroke="#000" />
                <path d="M20.500 3v20M28.500 3v20" stroke="#000" strokeWidth="2" />
            </>
        ),
    },
    {
        name: "Resistor",
        width: "w-[46px]",
        row: 1,
        icon: <rect x="5" y="8" width="37" height="10" stroke="#000" strokeWidth="2" />,
    },
    { name: "Library", width: "w-9", row: 1, text: "LIB" },
    {
        name: "Wire",
        width: "w-9",
        row: 1,
        icon: (
            <>
                <path d="M8 12.500h20" stroke="#000" />
                <circle cx="8" cy="12.500" r="2" fill="#000" />
                <circle cx="28" cy="12.500" r="2" fill="#000" />
            </>
        ),
    },
    { name: "Low shelf", width: "w-9", row: 2, icon: <path d="M3 6h12l8 7h11" stroke="red" strokeWidth="2" /> },
    {
        name: "High shelf",
        width: "w-9",
        row: 2,
        icon: (
            <>
                <path d="M3 13h12l7-7h12" stroke="#0028ff" strokeWidth="2" />
                <circle cx="9" cy="8" r="1" fill="#777" />
            </>
        ),
    },
    {
        name: "Parametric EQ",
        width: "w-9",
        row: 2,
        icon: <path d="M3 16C11 16 12 6 18.500 6S27 16 34 16" stroke="green" strokeWidth="2" />,
    },
    {
        name: "Crossover",
        width: "w-9",
        row: 2,
        icon: (
            <>
                <path d="M3 9l31 8" stroke="red" strokeWidth="2" />
                <path d="M3 17l31-8" stroke="#0028ff" strokeWidth="2" />
            </>
        ),
    },
    { name: "Biquad", width: "w-9", row: 2, text: "BiQ" },
    { name: "Transfer function", width: "w-9", row: 2, text: "G(f)" },
    {
        name: "Inductor",
        width: "w-[46px]",
        row: 2,
        icon: (
            <path
                d="M4 12C5 7 12 5 13 11c1 7-4 7-3 2 1-8 9-8 10-2 1 7-4 7-3 2 1-8 9-8 10-2 1 7-4 7-3 2 1-8 9-8 10-2 1 7-4 7-3 2 1-8 9-8 11-1"
                stroke="#000"
                strokeWidth="1.800"
            />
        ),
    },
    {
        name: "Transformer",
        width: "w-[46px]",
        row: 2,
        icon: (
            <>
                <path d="M4 12.500h8M35 12.500h8" stroke="#000" />
                <circle cx="19.500" cy="13" r="7.500" stroke="#000" strokeWidth="1.500" />
                <circle cx="27.500" cy="13" r="7.500" stroke="#000" strokeWidth="1.500" />
            </>
        ),
    },
    {
        name: "Driver",
        width: "w-9",
        row: 2,
        icon: <path d="M12 7h5v12h-5zM17 8l8-4v18l-8-4" stroke="#000" strokeWidth="2" />,
    },
    {
        name: "Ground",
        width: "w-9",
        row: 2,
        icon: (
            <>
                <path d="M18.500 5v4" stroke="#000" />
                <path d="M8 9h20L18 18z" stroke="#000" strokeWidth="2" />
            </>
        ),
    },
    { name: "Text", width: "w-[22px]", row: 2, text: "T" },
    { name: "Delete", width: "w-[22px]", row: 2, text: "X" },
];

function ToolRow({ row, children }: { row: number; children?: ReactNode }) {
    return (
        <div className="flex items-center gap-[3px]">
            {TOOLS.filter((t) => t.row === row).map((t) => (
                <button
                    key={t.name}
                    aria-label={t.name}
                    className={`relative h-[25px] border border-[#7a7a7a] text-xs text-[#1c1c1c] ${t.width} ${
                        t.name === "Delete" ? "bg-[#add8e6]" : "bg-[#dcdcdc]"
                    }`}
                >
                    {t.text ?? (
                        <svg className="absolute -inset-px size-full overflow-visible" fill="none">
                            {t.icon}
                        </svg>
                    )}
                </button>
            ))}
            {children}
        </div>
    );
}

type Param = [string, string, boolean?];

type BlockProps = {
    x: number;
    y: number;
    title?: string;
    shape: "hp" | "lp" | "dip" | "peak" | "shelf" | "lt";
    params: Param[];
    valueX?: number;
    off?: boolean;
};

const SHAPES = {
    hp: <path d="M10 33L28 15.500H49" stroke="blue" />,
    lp: <path d="M10 15.500H31L49 33" stroke="red" />,
    dip: <path d="M9 14C20 14 22 28 29.500 28S40 14 50 14" stroke="green" />,
    peak: <path d="M9 28C20 28 22 14 29.500 14S40 28 50 28" stroke="green" />,
    shelf: <path d="M10 25H25L34 15.500H48" stroke="blue" />,
    lt: <path d="M9 11.500C14 8 19 8 22 12L28 20C32 26 35 28 40 27L49 24.500" stroke="red" />,
};

function Params({ params, valueX = 16 }: { params: Param[]; valueX?: number }) {
    return (
        <>
            {params.map(([name, value, optimized], i) => (
                <g key={i}>
                    {optimized && (
                        <rect x="15" y={42 + i * 12} width={value.length * 6 + 1} height="12" fill="#c8ffc8" />
                    )}
                    <text x="4" y={52 + i * 12}>
                        {name}
                    </text>
                    <text x={valueX} y={52 + i * 12}>
                        {value}
                    </text>
                </g>
            ))}
        </>
    );
}

function Ports() {
    return (
        <g fill="#000">
            {[
                [0, 11],
                [0, 30],
                [59, 11],
                [59, 30],
            ].map(([cx, cy], i) => (
                <circle key={i} cx={cx} cy={cy} r="2" />
            ))}
        </g>
    );
}

function Block({ x, y, title, shape, params, valueX, off }: BlockProps) {
    return (
        <g transform={`translate(${x} ${y})`}>
            <rect x="1" width="56" height="40" fill="#fff" stroke={off ? "#b4b4b4" : "#000"} strokeWidth={off ? 1 : 2} />
            <Ports />
            {title && (
                <>
                    <text x="4" y="-5">
                        {title}
                    </text>
                    <text x="6" y="12">
                        IIR
                    </text>
                </>
            )}
            <g fill="none" strokeWidth={off ? 1 : 2} opacity={off ? 0.3 : 1}>
                {SHAPES[shape]}
            </g>
            {off && <path d="M0 20H57" stroke="#000" strokeWidth="4" />}
            <Params params={params} valueX={valueX} />
        </g>
    );
}

function Amp({ y, name, gain, optimized }: { y: number; name: string; gain: string; optimized?: boolean }) {
    return (
        <g transform={`translate(84 ${y})`}>
            <rect x="1" width="56" height="40" fill="#fff" stroke="#000" strokeWidth="2" />
            <Ports />
            <path d="M18 5V37L46 21z" fill="none" stroke="#000" strokeWidth="1.500" />
            <text x="20" y="25">
                {name}
            </text>
            <text x="46" y="12">
                +
            </text>
            <text x="46" y="33">
                -
            </text>
            <Params
                params={[
                    ["A", gain, optimized],
                    ["dt", "0s"],
                    ["", "0m"],
                ]}
            />
        </g>
    );
}

function Driver({ x, y, name, color, offset }: { x: number; y: number; name: string; color: string; offset: string }) {
    return (
        <g transform={`translate(${x} ${y})`}>
            <path d="M0 0V17M0 42V68" stroke="#000" />
            <circle r="2" fill="#000" />
            <circle cy="58" r="2" fill="#000" />
            <path
                d="M-2 17H8V42H-2zM8 21L20 8V51L8 39M-8 68H8L0 76z"
                fill="none"
                stroke="#000"
                strokeWidth="1.500"
            />
            <text x="2" y="14">
                +
            </text>
            <text x="3" y="53">
                -
            </text>
            <text x="25" y="10" fill={color}>
                {name}
            </text>
            {["X 0m", `Y ${offset}`, "Z 0m"].map((t, i) => (
                <text key={t} x="25" y={22 + i * 12}>
                    {t}
                </text>
            ))}
        </g>
    );
}

function Schematic() {
    return (
        <svg className="block h-full w-full text-[11px]" fill="#222">
            <g transform="translate(-6 -123)">
                <g fill="none" stroke="#000">
                    <path d="M35.500 196V182.500H84M74.500 182V504.500H84M74.500 348.500H84" />
                    <path d="M143 182.500H366M368 182.500H415" />
                    <path d="M143 348.500H562M143 504.500H415" />
                    <path d="M35.500 226V249" />
                    <circle cx="35.500" cy="211" r="15" strokeWidth="1.500" />
                    <path d="M26 211C29 200 33 202 36 211S43 222 46 211" strokeWidth="1.500" />
                    <path d="M27 250H44L35.500 258z" strokeWidth="1.500" />
                </g>
                <g fill="#000">
                    <circle cx="35.500" cy="182.500" r="2" />
                    <circle cx="35.500" cy="240" r="2" />
                    <circle cx="74.500" cy="182.500" r="2" />
                    <circle cx="74.500" cy="348.500" r="2" />
                </g>
                <text x="39" y="193">
                    2.83V
                </text>
                <text x="53" y="216">
                    0s
                </text>
                <text x="39" y="237">
                    1mΩ
                </text>

                <Amp y={171} name="A1" gain="-8.1dB" optimized />
                <Block x={152} y={171} title="LR24" shape="hp" params={[["f", "3000Hz"]]} />
                <Block
                    x={230}
                    y={171}
                    title="Param EQ"
                    shape="dip"
                    params={[
                        ["f", "6935Hz", true],
                        ["A", "-0.2dB", true],
                        ["Q", "2.92", true],
                    ]}
                />
                <Block
                    x={308}
                    y={171}
                    title="2nd order"
                    shape="shelf"
                    params={[
                        ["f", "18848Hz", true],
                        ["A", "4.1dB", true],
                        ["Q", "0.859", true],
                    ]}
                />
                <Driver x={415.5} y={182} name="D1 Tweeter" color="red" offset="60mm" />

                <Amp y={337} name="A2" gain="1.1dB" optimized />
                <Block x={152} y={337} title="LR24" shape="hp" params={[["f", "350Hz"]]} />
                <Block x={220} y={337} title="LR24" shape="lp" params={[["f", "3000Hz"]]} />
                <Block
                    x={288}
                    y={337}
                    title="Param EQ"
                    shape="dip"
                    params={[
                        ["f", "1139Hz", true],
                        ["A", "-4.4dB", true],
                        ["Q", "1.04", true],
                    ]}
                />
                <Block
                    x={357}
                    y={337}
                    title="Param EQ"
                    shape="peak"
                    params={[
                        ["f", "1828Hz", true],
                        ["A", "1.7dB", true],
                        ["Q", "5.16", true],
                    ]}
                />
                <Block
                    x={426}
                    y={337}
                    title="Param EQ"
                    shape="dip"
                    params={[
                        ["f", "2967Hz", true],
                        ["A", "-1.8dB", true],
                        ["Q", "4.75", true],
                    ]}
                />
                <Block
                    x={494}
                    y={337}
                    title="Param EQ"
                    shape="dip"
                    off
                    params={[
                        ["f", "7124Hz"],
                        ["A", "-10dB"],
                        ["Q", "5"],
                    ]}
                />
                <Driver x={562} y={348} name="D2 Mid" color="green" offset="-85mm" />

                <Amp y={493} name="A3" gain="0dB" />
                <Block x={152} y={493} title="LR24" shape="lp" params={[["f", "350Hz"]]} />
                <Block
                    x={348}
                    y={493}
                    shape="lt"
                    valueX={20}
                    params={[
                        ["fo", "72Hz"],
                        ["Qo", "0.8"],
                        ["fp", "40Hz"],
                        ["Qp", "0.707"],
                    ]}
                />
                <Driver x={415.5} y={504} name="D3 Woof" color="blue" offset="-320mm" />
            </g>
        </svg>
    );
}

const COLUMNS: [string, string][] = [
    ["Opt", "w-[31px] pl-[7px]"],
    ["Name", "w-[44px] pl-[7px]"],
    ["Value", "w-[49px] pl-[7px]"],
    ["Unit", "w-[31px] pl-[7px]"],
    ["Min", "w-[48px] pl-[7px]"],
    ["Max", "w-[49px] pl-[7px]"],
    ["Expression", "pl-[7px]"],
];

function ParamTable() {
    return (
        <div className="h-[132px] w-[334px] border-2 border-[#2a2a2a] bg-[#ababab]">
            <table className="w-full table-fixed bg-white">
                <thead>
                    <tr>
                        {COLUMNS.map(([name, cls]) => (
                            <th
                                key={name}
                                className={`h-[21px] border-r border-[#e4e4e4] text-left font-normal ${cls}`}
                            >
                                {name}
                            </th>
                        ))}
                    </tr>
                </thead>
            </table>
        </div>
    );
}

function SnapGroup() {
    return (
        <fieldset className="h-[105px] w-[57px] border border-[#dcdcdc] pl-[7px]">
            <legend className="px-[2px] leading-[14px]">Snap</legend>
            <div className="flex flex-col gap-[7px] pt-[3px]">
                {["5 %", "E12", "E24", "E48"].map((label) => (
                    <label key={label} className="flex items-center gap-[5px] leading-[14px]">
                        <input
                            type="radio"
                            name="snap"
                            defaultChecked={label === "E48"}
                            className="size-[13px] shrink-0 appearance-none rounded-full border border-[#868686] bg-[#f6f6f6] checked:border-4 checked:border-[#005fb8] checked:bg-white"
                        />
                        {label === "5 %" ? (
                            label
                        ) : (
                            <span>
                                {label.slice(0, 2)}
                                <u>{label.slice(2)}</u>
                            </span>
                        )}
                    </label>
                ))}
            </div>
        </fieldset>
    );
}

function VariantGroup() {
    return (
        <fieldset className="-mt-[2px] w-[68px] border border-[#dcdcdc] px-[3px] pb-1">
            <legend className="ml-1 px-[2px] leading-[14px]">Variant</legend>
            <div className="grid h-[170px] grid-cols-[27px_30px] content-between gap-x-[2px] pt-px">
                {range(1, 8, 1).map((n) => [
                    <button key={`s${n}`} className={`${SMALL_BUTTON} h-[18px] text-xs leading-4 text-[#ff1414]`}>
                        S{n}
                    </button>,
                    <button
                        key={`r${n}`}
                        disabled={n > 1}
                        className={
                            n === 1
                                ? "flex h-[18px] items-center justify-center rounded border border-[#005fb8] bg-[#cce4f7] text-xs font-bold text-[#1414ff]"
                                : "flex h-[18px] items-center justify-center rounded border border-[#ebebeb] bg-[#f7f7f7] text-xs text-[#b4b4b4]"
                        }
                    >
                        R{n}
                    </button>,
                ])}
            </div>
        </fieldset>
    );
}

function BottomPanel() {
    return (
        <div className="flex items-start gap-[6px] pb-1 pl-[11px]">
            <div className="flex w-[424px] flex-col gap-[9px]">
                <div className="flex justify-end gap-1">
                    {["O", "S", "I", "M", "R", "H"].map((t) => (
                        <button
                            key={t}
                            disabled
                            className="h-[19px] w-5 rounded border border-[#e8e8e8] bg-[#f7f7f7] text-xs leading-4 text-[#b4b4b4]"
                        >
                            {t}
                        </button>
                    ))}
                </div>
                <div className="flex items-start justify-between">
                    <ParamTable />
                    <div className="flex flex-col gap-[7px]">
                        <div className="flex items-start gap-[6px]">
                            <div className="flex flex-col gap-[5px] pt-px">
                                {["M2 13L8 2l6 11z", "M2 3L8 14l6-11z"].map((d, i) => (
                                    <button
                                        key={d}
                                        aria-label={i ? "Move down" : "Move up"}
                                        className={`${SMALL_BUTTON} size-5`}
                                    >
                                        <svg width="16" height="16" fill="#3c3c3c">
                                            <path d={d} />
                                        </svg>
                                    </button>
                                ))}
                            </div>
                            <SnapGroup />
                        </div>
                        <div className="flex items-center justify-between">
                            <label htmlFor="part">Part #</label>
                            <input id="part" className={`${FIELD} w-[46px]`} />
                        </div>
                    </div>
                </div>
            </div>
            <VariantGroup />
        </div>
    );
}

function Menu() {
    return (
        <nav className="flex h-[22px] w-[374px] items-center gap-[19px] bg-[#f4f4f4] pl-2 font-['Open_Sans',sans-serif] text-[11px] text-black">
            {["File", "View", "Tools", "Options", "Help"].map((item) => (
                <button key={item}>
                    <u>{item[0]}</u>
                    {item.slice(1)}
                </button>
            ))}
        </nav>
    );
}

function TopLeft() {
    return (
        <div className="flex items-start">
            <div className="w-[374px]">
                <Menu />
                <div role="tablist" className="flex h-[23px] items-center leading-[14px]">
                    <button role="tab" className="w-[41px] pl-[3px] text-left">
                        Drivers
                    </button>
                    <button role="tab" aria-selected className="border border-white bg-[#fafafa]">
                        <span className="block border border-dotted border-black px-[2px] leading-[14px]">
                            Crossover
                        </span>
                    </button>
                    <button role="tab" className="border-r border-[#e2e2e2] px-[5px]">
                        Room
                    </button>
                </div>
            </div>
            <div className="flex items-center pl-2 pt-[18px]">
                <input
                    aria-label="Grid x"
                    defaultValue="68"
                    className="h-[19px] w-7 border-b border-[#999] bg-[#f6f6f6] text-center text-xs"
                />
                <input
                    aria-label="Grid y"
                    defaultValue="21"
                    className="ml-1 h-[19px] w-7 border-b border-[#999] bg-[#f6f6f6] text-center text-xs"
                />
                <button className={`${SMALL_BUTTON} ml-[7px] h-[19px] w-[27px] text-xs`}>1:1</button>
                <button className={`${SMALL_BUTTON} ml-[6px] h-[19px] w-[26px] text-xs`}>Fit</button>
            </div>
        </div>
    );
}

export default function App() {
    return (
        <div className="flex min-h-screen flex-col bg-[#f0f0f0] font-['Liberation_Sans',Arial,sans-serif] text-[11px] text-[#1c1c1c]">
            <div className="h-2 bg-[#eef3fc]" />
            <div className="flex flex-1">
                <aside className="flex w-[759px] shrink-0 flex-col">
                    <TopLeft />
                    <div className="flex flex-col gap-[3px] pb-[11px] pl-[9px] pt-[7px]">
                        <ToolRow row={1}>
                            <span className="pl-[3px]">
                                <Tick id="stretch" label="Stretch" />
                            </span>
                        </ToolRow>
                        <ToolRow row={2} />
                    </div>
                    <div className="flex flex-1 pl-[6px]">
                        <div className="w-[725px] bg-white">
                            <Schematic />
                        </div>
                        <div className="ml-[6px] mt-[12px] h-3/4 w-[3px] rounded-full bg-[#8a8a8a]" />
                    </div>
                    <div className="flex h-[20px] pl-5 pt-[7px]">
                        <div className="h-[2px] w-[258px] bg-[#8a8a8a]" />
                    </div>
                    <BottomPanel />
                </aside>
                <main className="flex flex-1 flex-col">
                    <ChartToolbar />
                    <div className="flex flex-col gap-[6px] pb-[11px]">
                        <SplChart />
                        <CtaChart />
                        <Chart
                            title="Directivity (hor)"
                            leftUnit="dB"
                            rightUnit="deg"
                            left={<ColorScale />}
                            right={range(90, -90, -30)}
                        >
                            <Heatmap />
                        </Chart>
                    </div>
                </main>
            </div>
        </div>
    );
}
